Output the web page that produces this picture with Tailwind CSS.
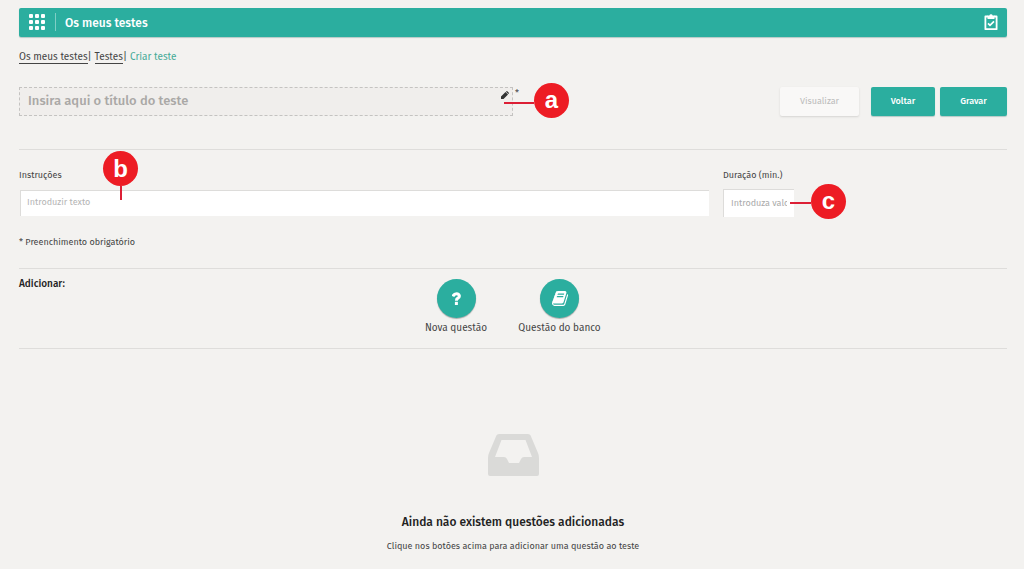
<!DOCTYPE html>
<html lang="pt">
<head>
<meta charset="utf-8">
<meta name="viewport" content="width=device-width, initial-scale=1">
<title>Criar teste</title>
<script src="https://cdn.jsdelivr.net/npm/@tailwindcss/browser@4"></script>
</head>
<body class="min-h-screen bg-[#f3f2f0] pt-2 pr-[17px] pl-[19px] font-['Fira_Sans','Noto_Sans',sans-serif] text-[9px] text-[#444]">
<header class="flex h-[29px] items-center rounded-xs bg-[#2bae9f] px-2 pb-px text-white shadow-[0_1px_1px_#b5c9c6]">
  <button type="button" aria-label="Menu" class="pl-[2px]">
    <svg class="size-4" viewBox="0 0 16 16" fill="currentColor"><rect width="4" height="4" rx="1"/><rect x="6" width="4" height="4" rx="1"/><rect x="12" width="4" height="4" rx="1"/><rect y="6" width="4" height="4" rx="1"/><rect x="6" y="6" width="4" height="4" rx="1"/><rect x="12" y="6" width="4" height="4" rx="1"/><rect y="12" width="4" height="4" rx="1"/><rect x="6" y="12" width="4" height="4" rx="1"/><rect x="12" y="12" width="4" height="4" rx="1"/></svg>
  </button>
  <h1 class="ml-[10px] flex h-[18px] items-center border-l border-white/40 pt-px pl-[9px] text-[12px] font-medium">Os meus testes</h1>
  <svg class="ml-auto h-4 w-4" viewBox="0 0 16 16" fill="none" stroke="currentColor"><path d="M5 2.500H2.400v12.700h11.200V2.500H11" stroke-width="1.800" stroke-linejoin="round"/><path d="M4.500 1.500H6.300a1.800 1.800 0 0 1 3.400 0h1.800v3.500h-7z" fill="currentColor" stroke="none"/><path d="M5 9.300l2 2 4-4" stroke-width="1.700"/></svg>
</header>

<nav aria-label="Navegação" class="mt-[13px] flex h-[14px] items-center text-[10px] leading-[12px]">
  <a href="#" class="border-b border-[#444]">Os meus testes</a><span class="mr-[3px]">|</span>
  <a href="#" class="border-b border-[#444]">Testes</a><span class="mr-[3px]">|</span>
  <span class="text-[#45aa97]">Criar teste</span>
</nav>

<form>
<div class="flex h-[86px] items-start border-b border-[#dedddb] pt-[23px]">
  <div class="relative w-1/2">
    <input aria-label="Título do teste" placeholder="Insira aqui o título do teste" class="block h-[29px] w-full border border-dashed border-[#c4c3c1] bg-[#f0eeec] px-2 pb-[2px] text-[13px] font-medium placeholder:text-[#aaa8a6]">
    <svg class="absolute top-1 right-1 size-2" viewBox="0 0 8 8" fill="#333"><path d="M0 8V5.500L4.500 1l2.500 2.500L2.500 8zM5 .7l.5-.5q.4-.4.8 0l1.500 1.500q.4.400 0 .8L7.300 3z"/></svg>
    <div class="absolute top-[-4px] left-[485px] flex items-center">
      <span class="mt-[4px] h-[2px] w-[30px] bg-[#dc1f35]"></span>
      <span class="flex size-[35px] items-center justify-center rounded-full bg-[#ed1c24] pb-[2px] font-['Liberation_Sans',sans-serif] text-2xl leading-none font-bold text-white">a</span>
    </div>
  </div>
  <span class="ml-[2px]">*</span>
  <div class="ml-auto flex gap-[5px] font-medium">
    <button type="button" disabled class="mr-[7px] h-[29px] w-[79px] rounded-xs bg-[#f9f8f7] font-normal text-[#bbb] shadow-[0_1px_2px_#d5d4d2]">Visualizar</button>
    <button type="button" class="h-[29px] w-16 rounded-xs bg-[#2bae9f] text-white shadow-[0_1px_1px_#b5c9c6]">Voltar</button>
    <button type="submit" class="h-[29px] w-[67px] rounded-xs bg-[#2bae9f] text-white shadow-[0_1px_1px_#b5c9c6]">Gravar</button>
  </div>
</div>

<section class="h-[119px] border-b border-[#dedddb] pt-[18px]">
  <div class="flex">
    <div class="relative w-[704px]">
      <label for="inst" class="block h-[22px] leading-[15px]">Instruções</label>
      <div class="pr-[14px] pl-px"><input id="inst" placeholder="Introduzir texto" class="block h-[26px] w-full border-t border-l border-[#dddcda] bg-white pb-[3px] pl-[6px] placeholder:text-[#b5b5b5]"></div>
      <div class="absolute top-[-17px] left-[84px] flex flex-col items-center">
        <span class="flex size-[35px] items-center justify-center rounded-full bg-[#ed1c24] font-['Liberation_Sans',sans-serif] text-2xl leading-none font-bold text-white">b</span>
        <span class="h-[14px] w-[2px] bg-[#dc1f35]"></span>
      </div>
    </div>
    <div class="relative">
      <label for="dur" class="block h-[21px] leading-[15px]">Duração (min.)</label>
      <input id="dur" placeholder="Introduza valor" class="block h-[28px] w-[71px] border-t border-l border-[#dddcda] bg-white px-[7px] pb-[2px] placeholder:text-[#aaa]">
      <div class="absolute top-[16px] left-[67px] flex items-center">
        <span class="mt-[2px] h-[2px] w-[21px] bg-[#dc1f35]"></span>
        <span class="flex size-[35px] items-center justify-center rounded-full bg-[#ed1c24] pb-[2px] font-['Liberation_Sans',sans-serif] text-2xl leading-none font-bold text-white">c</span>
      </div>
    </div>
  </div>
  <p class="mt-[18px] leading-[15px]">* Preenchimento obrigatório</p>
</section>

<section class="relative h-20 border-b border-[#dedddb] pt-[10px]">
  <h2 class="absolute top-2 left-0 text-[10px] leading-[14px] font-medium text-[#222]">Adicionar:</h2>
  <div class="flex justify-center gap-7 text-[10px] leading-[14px] whitespace-nowrap">
    <button type="button" class="flex w-[65px] flex-col items-center gap-[3px]">
      <span class="flex size-[39px] items-center justify-center rounded-full bg-[#2bae9f] shadow-[0_1px_1px_#aaa]">
        <svg class="h-[13px] w-[9px]" viewBox="0 0 9 13" fill="none" stroke="#fff"><path d="M.9 4.300Q2 1.700 4.500 1.700T7.400 4Q7.400 5.300 5.900 6.100T4.400 8.800" stroke-width="3"/><path d="M2.900 9.800h3V13h-3z" fill="#fff" stroke="none"/></svg>
      </span>Nova questão
    </button>
    <button type="button" class="flex w-[86px] flex-col items-center gap-[3px]">
      <span class="flex size-[39px] items-center justify-center rounded-full bg-[#2bae9f] shadow-[0_1px_1px_#aaa]">
        <svg class="h-[15px] w-4" viewBox="0 0 1664 1536" fill="#fff"><path d="M1639 350q40 57 18 129l-275 906q-19 64-76.500 107.500T1183 1536H260q-77 0-148.500-53.500T12 1351q-24-67-2-127 0-4 3-27t4-37q1-8-3-21.500t-3-19.500q2-11 8-21t16.500-23.500T52 1051q23-38 45-91.500t30-91.500q3-10 .5-30t-.5-28q3-11 17-28t17-23q21-36 42-92t25-90q1-9-2.500-32t.5-28q4-13 22-30.500t22-22.500q19-26 42.500-84.500T340 283q1-8-3-25.500t-2-26.500q2-8 9-18t18-23 17-21q8-12 16.500-30.500t15-35 16-36 19.500-32T469.500 12t36-11.500T553 6l-1 3q38-9 51-9h761q74 0 114 56t18 130l-274 906q-36 119-71.500 153.500T1022 1280H153q-27 0-38 15-11 16-1 43 24 70 144 70h923q29 0 56-15.500t35-41.500l300-987q7-22 5-57 38 15 59 43zm-1064 2q-4 13 2 22.500t20 9.500h608q13 0 25.500-9.500T1247 352l21-64q4-13-2-22.500t-20-9.500H638q-13 0-25.500 9.500T596 288zm-83 256q-4 13 2 22.500t20 9.500h608q13 0 25.500-9.500T1164 608l21-64q4-13-2-22.500t-20-9.500H555q-13 0-25.500 9.500T513 544z"/></svg>
      </span>Questão do banco
    </button>
  </div>
</section>
</form>

<main class="flex flex-col items-center pt-[85px]">
  <svg class="h-[42px] w-[51px]" viewBox="0 0 51 42" fill="#dadad8" fill-rule="evenodd"><path d="M11 0h29q2 0 2.600 1.500L50 19q1 2 1 5v16q0 2-2 2H2q-2 0-2-2V24q0-3 1-5L8.400 1.500Q9 0 11 0zM13.500 6L7 23h9q2 0 3 2l2 4h10l2-4q1-2 3-2h8L37.500 6z"/></svg>
  <h2 class="mt-[37px] text-[12px] leading-[18px] font-medium text-[#222]">Ainda não existem questões adicionadas</h2>
  <p class="mt-2 leading-[14px]">Clique nos botões acima para adicionar uma questão ao teste</p>
</main>
</body>
</html>
